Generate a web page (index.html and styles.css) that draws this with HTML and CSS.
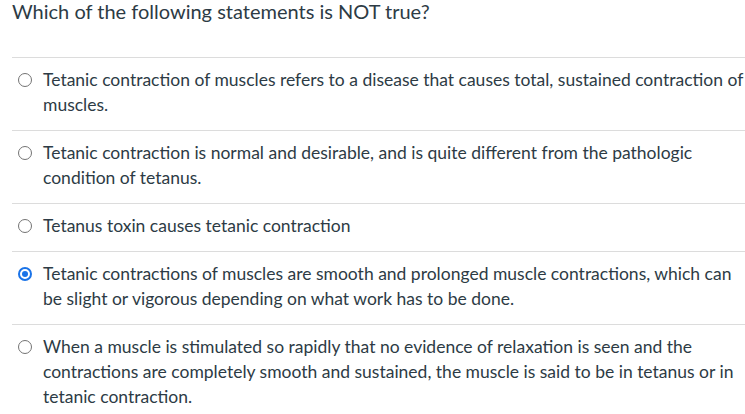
FILE: index.html
```html
<!DOCTYPE html>
<html>
<head>
<meta charset="utf-8">
<link rel="stylesheet" href="styles.css">
</head>
<body>
<div class="quiz">
  <div class="question">Which of the following statements is NOT true?</div>
  <div class="answers">
    <label class="answer">
      <span class="radio"></span>
      <span class="text">Tetanic contraction of muscles refers to a disease that causes total, sustained contraction of muscles.</span>
    </label>
    <label class="answer">
      <span class="radio"></span>
      <span class="text">Tetanic contraction is normal and desirable, and is quite different from the pathologic condition of tetanus.</span>
    </label>
    <label class="answer">
      <span class="radio"></span>
      <span class="text">Tetanus toxin causes tetanic contraction</span>
    </label>
    <label class="answer">
      <span class="radio checked"></span>
      <span class="text">Tetanic contractions of muscles are smooth and prolonged muscle contractions, which can be slight or vigorous depending on what work has to be done.</span>
    </label>
    <label class="answer">
      <span class="radio"></span>
      <span class="text">When a muscle is stimulated so rapidly that no evidence of relaxation is seen and the contractions are completely smooth and sustained, the muscle is said to be in tetanus or in tetanic contraction.</span>
    </label>
  </div>
</div>
</body>
</html>
```
FILE: styles.css
```css
html, body {
  margin: 0;
  padding: 0;
  background: #fff;
}
.quiz {
  font-family: Lato, "Open Sans", sans-serif;
  color: #2d3b45;
  padding-left: 12px;
}
.question {
  font-size: 20px;
  line-height: 22px;
  height: 57px;
  border-bottom: 1px solid #dcdcdc;
}
.answer {
  display: flex;
  align-items: flex-start;
  gap: 11px;
  padding: 9px 0 13px 6px;
  border-top: 1px solid #dcdcdc;
  font-size: 17.5px;
  line-height: 25px;
}
.answer:first-child {
  border-top: none;
}
.radio {
  flex: none;
  width: 14px;
  height: 14px;
  box-sizing: border-box;
  border: 1.5px solid #737373;
  border-radius: 50%;
  margin-top: 6px;
  position: relative;
}
.radio.checked {
  border: 2px solid #1a73e8;
}
.radio.checked::after {
  content: "";
  position: absolute;
  left: 2px;
  top: 2px;
  width: 6px;
  height: 6px;
  border-radius: 50%;
  background: #1a73e8;
}
.text {
  flex: 1;
}
```
